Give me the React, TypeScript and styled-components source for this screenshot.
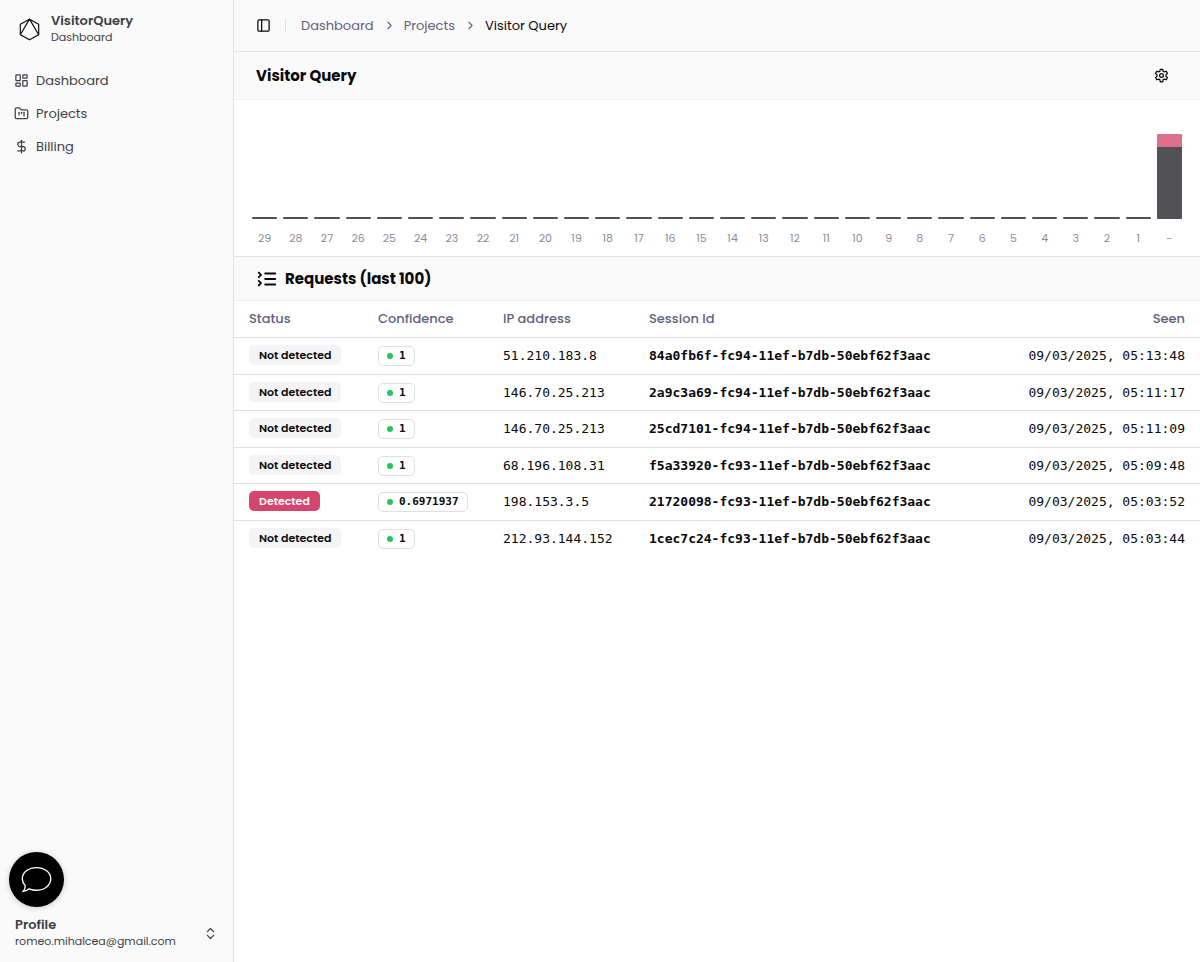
import React from "react";
import styled, { createGlobalStyle, css } from "styled-components";
import {
  ChevronRight,
  ChevronsUpDown,
  DollarSign,
  FolderKanban,
  LayoutDashboard,
  PanelLeft,
} from "lucide-react";

const sans = `Poppins, Inter, "Open Sans", sans-serif`;
const mono = `"DejaVu Sans Mono", "Liberation Mono", monospace`;

const color = {
  ink: "#09090b",
  side: "#3f3f46",
  muted: "#64607f",
  label: "#8e8c9f",
  line: "#e0e0e3",
  soft: "#f0f0f1",
  panel: "#fafafa",
  bar: "#505055",
  flagged: "#dd708b",
  danger: "#d6456b",
};

const GlobalStyle = createGlobalStyle`
  *, *::before, *::after { box-sizing: border-box; }
  body { margin: 0; background: #fff; color: ${color.ink}; font: 13px/20px ${sans}; }
  button { font: inherit; color: inherit; background: none; border: 0; padding: 0; cursor: pointer; }
  a { color: inherit; text-decoration: none; }
  h1, h2, ul, ol { margin: 0; padding: 0; }
  ul, ol { list-style: none; }
  svg { display: block; flex: none; }
`;

const Shell = styled.div`
  display: flex;
  min-height: 100vh;
`;

const Sidebar = styled.aside`
  display: flex;
  flex-direction: column;
  flex: none;
  width: 234px;
  height: 100vh;
  position: sticky;
  top: 0;
  background: ${color.panel};
  border-right: 1px solid ${color.line};
  color: ${color.side};
`;

const Brand = styled.a`
  display: flex;
  align-items: center;
  gap: 10px;
  padding: 13px 18px 12px;
`;

const TwoLines = styled.span`
  display: flex;
  flex-direction: column;
  text-align: left;
  line-height: 16px;
`;

const Strong = styled.span`
  font-size: 13px;
  font-weight: 600;
`;

const Small = styled.span`
  font-size: 11px;
`;

const NavItem = styled.a`
  display: flex;
  align-items: center;
  gap: 7px;
  height: 33px;
  padding: 0 14px;
`;

const Nav = styled.nav`
  flex: 1;
  padding-top: 7px;
`;

const ChatButton = styled.button`
  display: grid;
  place-items: center;
  width: 55px;
  height: 55px;
  margin-left: 9px;
  border-radius: 50%;
  background: #000;
  color: #fff;
  box-shadow: 0 1px 6px rgba(0, 0, 0, 0.2);
`;

const ProfileButton = styled.button`
  display: flex;
  align-items: center;
  justify-content: space-between;
  padding: 10px 15px 13px;
`;

const Main = styled.main`
  flex: 1;
  min-width: 0;
`;

const TopBar = styled.header`
  display: flex;
  align-items: center;
  height: 52px;
  padding: 0 22px;
  background: ${color.panel};
  border-bottom: 1px solid ${color.line};
`;

const Divider = styled.span`
  width: 1px;
  height: 15px;
  margin: 0 15px 0 14px;
  background: ${color.line};
`;

const Crumbs = styled.ol`
  display: flex;
  align-items: center;
  gap: 8px;
  color: ${color.muted};
`;

const Crumb = styled.li`
  display: flex;
  align-items: center;
  gap: 9px;
  &[aria-current] { color: ${color.ink}; }
`;

const SectionBar = styled.div<{ $height: number }>`
  display: flex;
  align-items: center;
  gap: 7px;
  height: ${(p) => p.$height}px;
  padding: 0 22px;
  background: ${color.panel};
  border-bottom: 1px solid ${color.soft};
`;

const Title = styled.h1`
  flex: 1;
  font-size: 15px;
  line-height: 20px;
  font-weight: 700;
`;

const IconButton = styled.button`
  display: grid;
  place-items: center;
  width: 34px;
  height: 32px;
`;

const Chart = styled.ul`
  display: grid;
  grid-template-columns: repeat(30, 1fr);
  gap: 6px;
  height: 157px;
  padding: 0 18px 9px;
  border-bottom: 1px solid ${color.line};
`;

const Day = styled.li`
  display: flex;
  flex-direction: column;
  justify-content: flex-end;
  text-align: center;
  font-size: 11px;
  line-height: 18px;
  color: ${color.label};
`;

const Stack = styled.span`
  display: flex;
  flex-direction: column;
  margin-bottom: 10px;
  border-radius: 1px;
  overflow: hidden;
`;

const Segment = styled.span<{ $flagged?: boolean }>`
  background: ${(p) => (p.$flagged ? color.flagged : color.bar)};
`;

const Table = styled.table`
  width: 100%;
  table-layout: fixed;
  border-collapse: separate;
  border-spacing: 0;
`;

const cell = css`
  height: 37px;
  padding: 0 15px;
  text-align: left;
  border-bottom: 1px solid ${color.line};
  &:last-child { text-align: right; }
`;

const Th = styled.th<{ $width?: number }>`
  ${cell}
  width: ${(p) => (p.$width ? `${p.$width}px` : "auto")};
  font-size: 13px;
  font-weight: 500;
  color: ${color.muted};
`;

const Td = styled.td<{ $bold?: boolean }>`
  ${cell}
  font-family: ${mono};
  font-size: 13px;
  font-weight: ${(p) => (p.$bold ? 700 : 400)};
  white-space: nowrap;
  tr:nth-child(even) > & { height: 36px; }
  tr:last-child > & { border-bottom: 0; }
`;

const Status = styled.span<{ $detected: boolean }>`
  display: block;
  width: fit-content;
  margin-bottom: 2px;
  padding: 0 10px;
  border-radius: 5px;
  font: 600 11px/20px ${sans};
  background: ${(p) => (p.$detected ? color.danger : "#f4f4f6")};
  color: ${(p) => (p.$detected ? "#fff" : color.ink)};
`;

const Confidence = styled.span`
  display: flex;
  align-items: center;
  gap: 6px;
  width: fit-content;
  padding: 0 8px;
  border: 1px solid ${color.line};
  border-radius: 5px;
  font-size: 11px;
  line-height: 18px;
  font-weight: 700;
  &::before {
    content: "";
    width: 6px;
    height: 6px;
    border-radius: 50%;
    background: #22c55e;
  }
`;

const requests = [
  { detected: false, confidence: "1", ip: "51.210.183.8", session: "84a0fb6f-fc94-11ef-b7db-50ebf62f3aac", seen: "09/03/2025, 05:13:48" },
  { detected: false, confidence: "1", ip: "146.70.25.213", session: "2a9c3a69-fc94-11ef-b7db-50ebf62f3aac", seen: "09/03/2025, 05:11:17" },
  { detected: false, confidence: "1", ip: "146.70.25.213", session: "25cd7101-fc94-11ef-b7db-50ebf62f3aac", seen: "09/03/2025, 05:11:09" },
  { detected: false, confidence: "1", ip: "68.196.108.31", session: "f5a33920-fc93-11ef-b7db-50ebf62f3aac", seen: "09/03/2025, 05:09:48" },
  { detected: true, confidence: "0.6971937", ip: "198.153.3.5", session: "21720098-fc93-11ef-b7db-50ebf62f3aac", seen: "09/03/2025, 05:03:52" },
  { detected: false, confidence: "1", ip: "212.93.144.152", session: "1cec7c24-fc93-11ef-b7db-50ebf62f3aac", seen: "09/03/2025, 05:03:44" },
];

const days = Array.from({ length: 30 }, (_, i) => ({
  label: i === 29 ? "-" : String(29 - i),
  clean: i === 29 ? 72 : 2,
  flagged: i === 29 ? 13 : 0,
}));

const Logo = () => (
  <svg width="23" height="23" viewBox="0 0 24 24" fill="none" stroke="#09090b" strokeWidth="1.2" strokeLinejoin="round">
    <path d="M12 1.200 21.600 6.600V17.400L12 22.800 2.400 17.400V6.600Z" />
    <path d="M12 1.200 2.400 17.400M12 1.200 21.600 17.400" />
  </svg>
);

const Gear = () => (
  <svg width="15" height="15" viewBox="0 0 24 24" fill="none" stroke="currentColor" strokeWidth="2" strokeLinejoin="round">
    <path d="M9.500 5 10 2h4l.5 3 2.200 1.300 2.900-1.100 2 3.500-2.400 1.900v2.800l2.400 1.900-2 3.500-2.900-1.100L14.500 19 14 22h-4l-.5-3-2.200-1.300-2.900 1.100-2-3.500 2.400-1.900v-2.800L2.400 8.700l2-3.500 2.900 1.100Z" />
    <circle cx="12" cy="12" r="3" />
  </svg>
);

const ListIcon = () => (
  <svg width="22" height="22" viewBox="0 0 24 24" fill="none" stroke="currentColor" strokeWidth="2" strokeLinecap="round" strokeLinejoin="round">
    <path d="m3 10 2.500-2.500L3 5M3 19l2.500-2.500L3 14M10 6h11M10 12h11M10 18h11" />
  </svg>
);

const Bubble = () => (
  <svg width="31" height="28" viewBox="0 0 32 28" fill="none" stroke="currentColor" strokeWidth="1.4" strokeLinejoin="round">
    <path d="M16 1.200C24.200 1.200 30.700 6.200 30.700 12.800S24.200 24.600 16 24.600c-2.800 0-5.400-.6-7.600-1.500-1.700 1.500-3.900 2.600-6.500 2.900 1.700-1.700 2.600-3.800 2.500-6.200C2.400 17.800 1.300 15.400 1.300 12.800 1.300 6.200 7.800 1.200 16 1.200Z" />
  </svg>
);

export default function App() {
  return (
    <Shell>
      <GlobalStyle />
      <Sidebar>
        <Brand href="#">
          <Logo />
          <TwoLines>
            <Strong>VisitorQuery</Strong>
            <Small>Dashboard</Small>
          </TwoLines>
        </Brand>
        <Nav aria-label="Main">
          <NavItem href="#dashboard"><LayoutDashboard size={15} /> Dashboard</NavItem>
          <NavItem href="#projects"><FolderKanban size={15} /> Projects</NavItem>
          <NavItem href="#billing"><DollarSign size={15} /> Billing</NavItem>
        </Nav>
        <ChatButton aria-label="Open chat"><Bubble /></ChatButton>
        <ProfileButton>
          <TwoLines>
            <Strong>Profile</Strong>
            <Small>romeo.mihalcea@gmail.com</Small>
          </TwoLines>
          <ChevronsUpDown size={15} />
        </ProfileButton>
      </Sidebar>
      <Main>
        <TopBar>
          <button aria-label="Toggle sidebar"><PanelLeft size={15} /></button>
          <Divider />
          <nav aria-label="Breadcrumb">
            <Crumbs>
              <Crumb><a href="#dashboard">Dashboard</a><ChevronRight size={13} /></Crumb>
              <Crumb><a href="#projects">Projects</a><ChevronRight size={13} /></Crumb>
              <Crumb aria-current="page">Visitor Query</Crumb>
            </Crumbs>
          </nav>
        </TopBar>
        <SectionBar $height={48}>
          <Title>Visitor Query</Title>
          <IconButton aria-label="Project settings"><Gear /></IconButton>
        </SectionBar>
        <Chart aria-label="Requests per day">
          {days.map((d) => (
            <Day key={d.label}>
              <Stack>
                {d.flagged > 0 && <Segment $flagged style={{ height: d.flagged }} />}
                <Segment style={{ height: d.clean }} />
              </Stack>
              {d.label}
            </Day>
          ))}
        </Chart>
        <SectionBar $height={44}>
          <ListIcon />
          <Title as="h2">Requests (last 100)</Title>
        </SectionBar>
        <Table>
          <thead>
            <tr>
              <Th $width={129}>Status</Th>
              <Th $width={125}>Confidence</Th>
              <Th $width={146}>IP address</Th>
              <Th>Session Id</Th>
              <Th>Seen</Th>
            </tr>
          </thead>
          <tbody>
            {requests.map((r) => (
              <tr key={r.session}>
                <Td><Status $detected={r.detected}>{r.detected ? "Detected" : "Not detected"}</Status></Td>
                <Td><Confidence>{r.confidence}</Confidence></Td>
                <Td>{r.ip}</Td>
                <Td $bold>{r.session}</Td>
                <Td>{r.seen}</Td>
              </tr>
            ))}
          </tbody>
        </Table>
      </Main>
    </Shell>
  );
}
